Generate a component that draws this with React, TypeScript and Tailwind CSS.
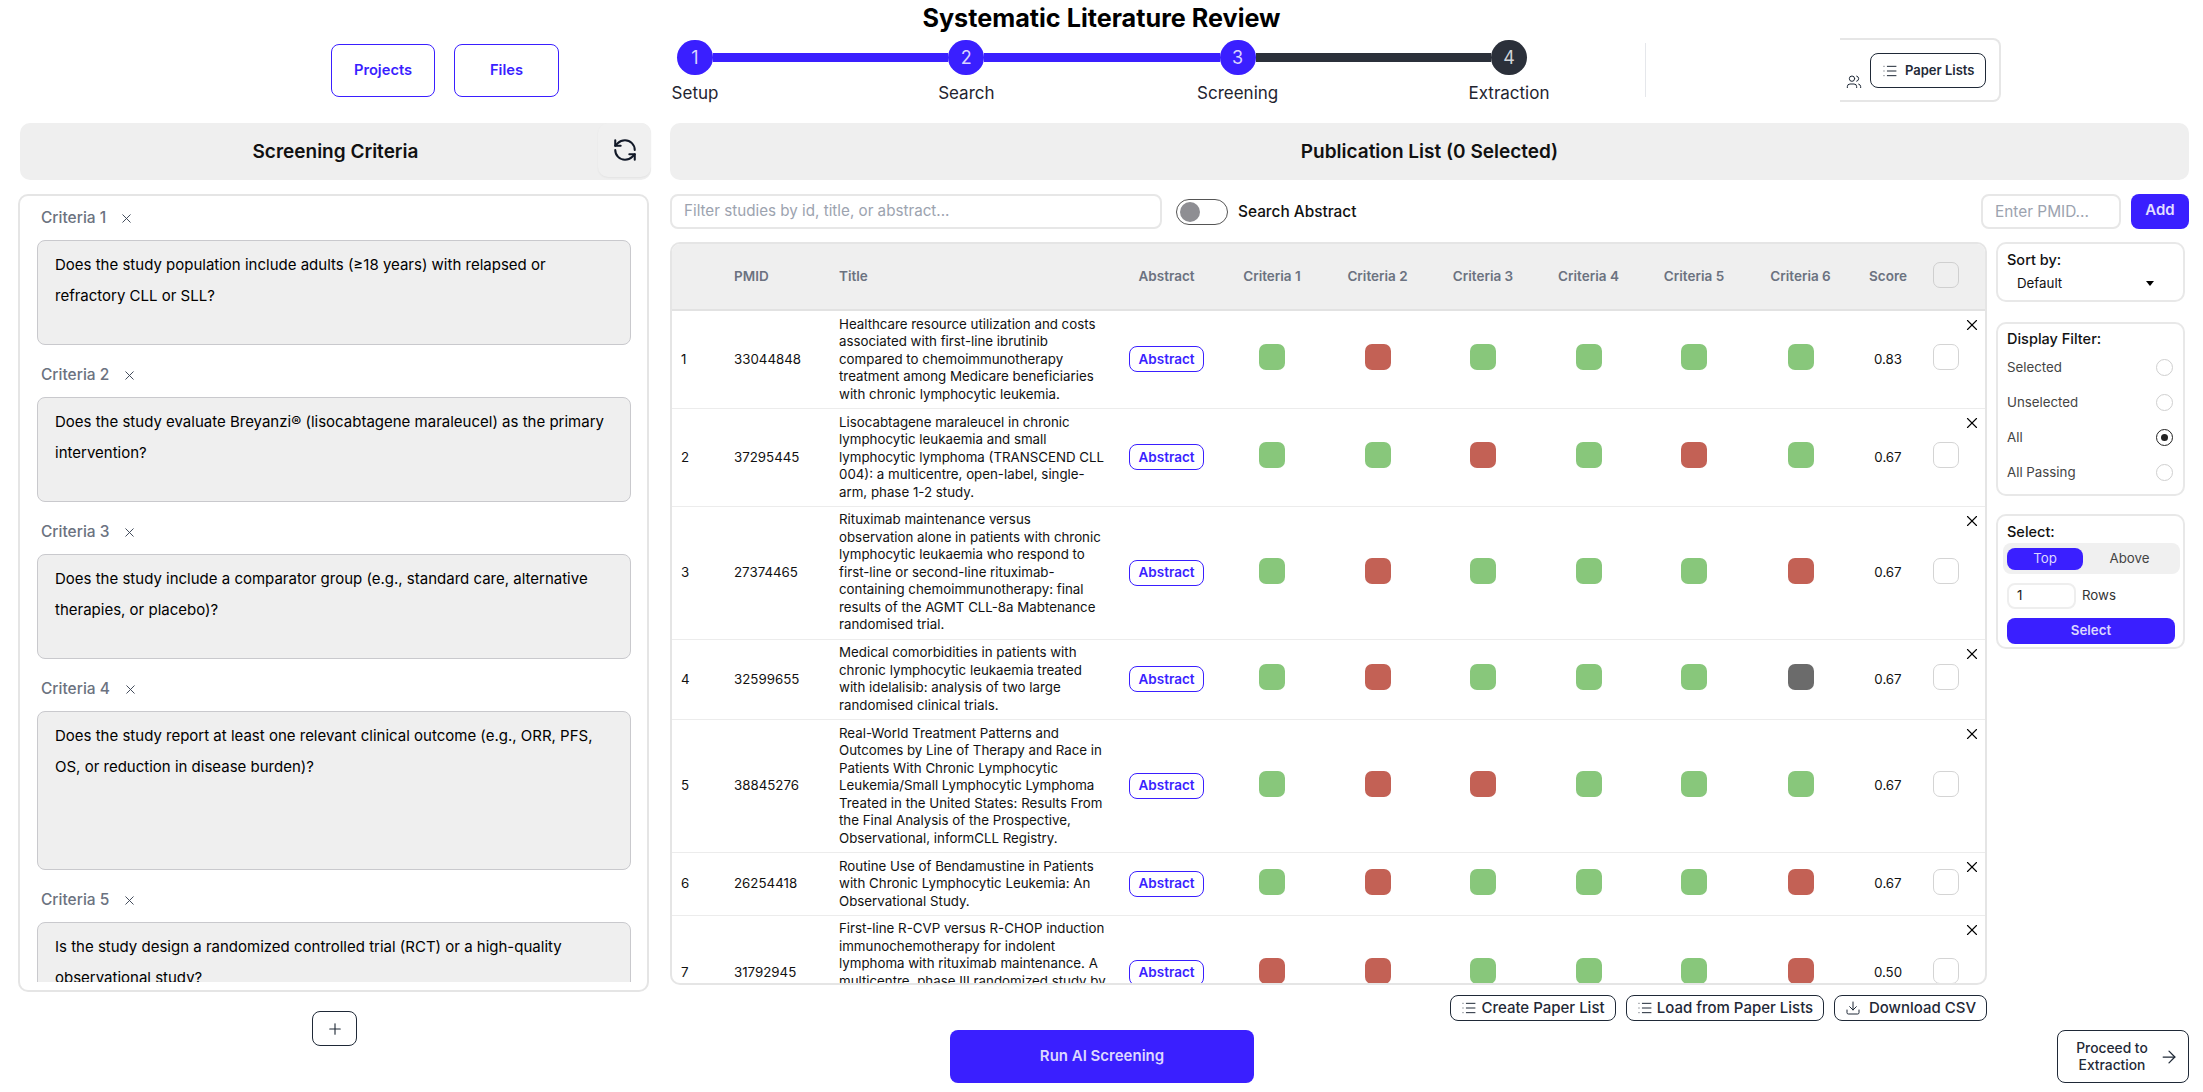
import { ArrowRight, Download, List, Plus, RefreshCcw, Users, X } from 'lucide-react'

type Mark = 'g' | 'r' | 'n'

type Paper = {
  pmid: string
  title: string
  marks: Mark[]
  score: string
}

const papers: Paper[] = [
  {
    pmid: '33044848',
    title:
      'Healthcare resource utilization and costs associated with first-line ibrutinib compared to chemoimmunotherapy treatment among Medicare beneficiaries with chronic lymphocytic leukemia.',
    marks: ['g', 'r', 'g', 'g', 'g', 'g'],
    score: '0.83',
  },
  {
    pmid: '37295445',
    title:
      'Lisocabtagene maraleucel in chronic lymphocytic leukaemia and small lymphocytic lymphoma (TRANSCEND CLL 004): a multicentre, open-label, single-arm, phase 1-2 study.',
    marks: ['g', 'g', 'r', 'g', 'r', 'g'],
    score: '0.67',
  },
  {
    pmid: '27374465',
    title:
      'Rituximab maintenance versus observation alone in patients with chronic lymphocytic leukaemia who respond to first-line or second-line rituximab-containing chemoimmunotherapy: final results of the AGMT CLL-8a Mabtenance randomised trial.',
    marks: ['g', 'r', 'g', 'g', 'g', 'r'],
    score: '0.67',
  },
  {
    pmid: '32599655',
    title:
      'Medical comorbidities in patients with chronic lymphocytic leukaemia treated with idelalisib: analysis of two large randomised clinical trials.',
    marks: ['g', 'r', 'g', 'g', 'g', 'n'],
    score: '0.67',
  },
  {
    pmid: '38845276',
    title:
      'Real-World Treatment Patterns and Outcomes by Line of Therapy and Race in Patients With Chronic Lymphocytic Leukemia/Small Lymphocytic Lymphoma Treated in the United States: Results From the Final Analysis of the Prospective, Observational, informCLL Registry.',
    marks: ['g', 'r', 'r', 'g', 'g', 'g'],
    score: '0.67',
  },
  {
    pmid: '26254418',
    title:
      'Routine Use of Bendamustine in Patients with Chronic Lymphocytic Leukemia: An Observational Study.',
    marks: ['g', 'r', 'g', 'g', 'g', 'r'],
    score: '0.67',
  },
  {
    pmid: '31792945',
    title:
      'First-line R-CVP versus R-CHOP induction immunochemotherapy for indolent lymphoma with rituximab maintenance. A multicentre, phase III randomized study by the Fondazione Italiana Linfomi and the Gruppo Italiano Studio Linfomi.',
    marks: ['r', 'r', 'g', 'g', 'g', 'r'],
    score: '0.50',
  },
]

const criteria = [
  {
    text: 'Does the study population include adults (≥18 years) with relapsed or refractory CLL or SLL?',
    tall: false,
  },
  {
    text: 'Does the study evaluate Breyanzi® (lisocabtagene maraleucel) as the primary intervention?',
    tall: false,
  },
  {
    text: 'Does the study include a comparator group (e.g., standard care, alternative therapies, or placebo)?',
    tall: false,
  },
  {
    text: 'Does the study report at least one relevant clinical outcome (e.g., ORR, PFS, OS, or reduction in disease burden)?',
    tall: true,
  },
  {
    text: 'Is the study design a randomized controlled trial (RCT) or a high-quality observational study?',
    tall: false,
  },
]

const steps = [
  { n: 1, label: 'Setup', active: true },
  { n: 2, label: 'Search', active: true },
  { n: 3, label: 'Screening', active: true },
  { n: 4, label: 'Extraction', active: false },
]

function Swatch({ mark }: { mark: Mark }) {
  const color = mark === 'g' ? 'bg-[#88c77b]' : mark === 'r' ? 'bg-[#c36155]' : 'bg-[#6b6b6b]'
  return <div className={`mx-auto mb-1 h-[26px] w-[26px] rounded-[7px] ${color}`} />
}

function Stepper() {
  return (
    <div className="ml-[118px] flex w-[850px] items-start">
      {steps.map((s, i) => (
        <div key={s.n} className={i < 3 ? 'flex flex-1 items-start' : 'flex items-start'}>
          <div className="mt-[2px] flex w-[36px] flex-col items-center">
            <div
              className={`flex h-[35px] w-[36px] items-center justify-center rounded-full text-[18px] ${
                s.active ? 'bg-[#3a1fff] text-[#d9d4ff]' : 'bg-[#2b303a] text-[#d1d5db]'
              }`}
            >
              {s.n}
            </div>
            <div className="mt-[5px] whitespace-nowrap text-[17px] leading-[26px] text-[#1f2430]">{s.label}</div>
          </div>
          {i < 3 && (
            <div className={`mt-[15px] h-[9px] flex-1 ${i < 2 ? 'bg-[#3a1fff]' : 'bg-[#2b303a]'}`} />
          )}
        </div>
      ))}
    </div>
  )
}

function Header() {
  return (
    <>
      <h1 className="h-[38px] pt-[1px] text-center text-[25.2px] font-bold leading-[34px] text-black">
        Systematic Literature Review
      </h1>
      <div className="flex h-[64px] items-start pl-[331px]">
        <button className="mt-[6px] h-[53px] w-[104px] rounded-lg border border-[#3a1fff] text-[14.7px] font-semibold text-[#3a1fff]">
          Projects
        </button>
        <button className="ml-[19px] mt-[6px] h-[53px] w-[105px] rounded-lg border border-[#3a1fff] text-[14.7px] font-semibold text-[#3a1fff]">
          Files
        </button>
        <Stepper />
        <div className="ml-[118px] mt-[5px] h-[54px] w-px bg-[#e5e7eb]" />
        <div className="ml-[194px] flex h-[64px] w-[161px] items-start overflow-hidden rounded-r-lg border-y-2 border-r-2 border-[#e6e6e6]">
          <div className="ml-[6px] mt-[34px] h-[14px] w-[16px] overflow-hidden text-[#1f2937]">
            <Users size={16} strokeWidth={1.5} />
          </div>
          <button className="ml-[8px] mt-[13px] flex h-[35px] w-[116px] items-center rounded-lg border border-[#1f2937] pl-[11px] text-[13px] font-semibold text-[#1f2937]">
            <List size={16} strokeWidth={1.5} className="mr-[7px]" />
            Paper Lists
          </button>
        </div>
      </div>
    </>
  )
}

function CriteriaColumn() {
  return (
    <div className="w-[631px]">
      <div className="relative flex h-[57px] items-center justify-center rounded-[10px] bg-[#efefef] pt-[2px] text-[19px] font-semibold text-[#111]">
        Screening Criteria
        <button className="absolute right-0 top-0 flex h-[54px] w-[53px] items-center justify-center rounded-[10px] bg-[#f0f0f0] shadow-[0_1px_2px_rgba(0,0,0,0.05)]">
          <RefreshCcw size={26} strokeWidth={1.9} className="text-[#111827]" />
        </button>
      </div>
      <div className="-ml-[2px] mt-[14px] h-[798px] w-[631px] rounded-[10px] border-2 border-[#e5e5e5] pb-[8px] pl-[17px] pr-[16px] pt-[10px]">
        <div className="flex h-full flex-col gap-[18px] overflow-hidden">
          {criteria.map((c, i) => (
            <div key={i} className="shrink-0">
              <div className="mb-[10px] flex h-[24px] items-center pl-[4px] text-[15.5px] font-medium text-[#6b7280]">
                <span>Criteria {i + 1}</span>
                <X size={15} strokeWidth={1.5} className="ml-[13px] text-[#374151]" />
              </div>
              <div
                className={`rounded-lg border border-[#c9c9cd] bg-[#efefef] px-[17px] py-[8px] text-[15px] leading-[31px] text-black ${
                  c.tall ? 'h-[159px]' : 'h-[105px]'
                }`}
              >
                {c.text}
              </div>
            </div>
          ))}
        </div>
      </div>
      <div className="mt-[19px] flex justify-center pr-[2px]">
        <button className="flex h-[35px] w-[45px] items-center justify-center rounded-lg border border-[#1f2937] text-[#1f2937]">
          <Plus size={18} strokeWidth={1.5} />
        </button>
      </div>
    </div>
  )
}

function PaperTable() {
  const th = 'text-[13.5px] font-semibold text-[#6b7280]'
  return (
    <div className="h-[743px] w-[1317px] overflow-hidden rounded-[10px] border-2 border-[#e5e5e5]">
      <table className="w-[1315px] table-fixed border-collapse text-[13.3px] leading-[17.5px] text-[#111]">
        <colgroup>
          <col className="w-[52px]" />
          <col className="w-[105px]" />
          <col className="w-[290px]" />
          <col className="w-[100px]" />
          <col className="w-[106px]" />
          <col className="w-[105px]" />
          <col className="w-[106px]" />
          <col className="w-[105px]" />
          <col className="w-[106px]" />
          <col className="w-[107px]" />
          <col className="w-[68px]" />
          <col className="w-[48px]" />
          <col />
        </colgroup>
        <thead>
          <tr className="h-[66px] border-b-2 border-[#e2e2e2] bg-[#efefef]">
            <th className={th} />
            <th className={`${th} pl-[10px] text-left`}>PMID</th>
            <th className={`${th} pl-[10px] text-left`}>Title</th>
            <th className={`${th} pr-[5px]`}>Abstract</th>
            {[1, 2, 3, 4, 5, 6].map((n) => (
              <th key={n} className={th}>
                Criteria {n}
              </th>
            ))}
            <th className={th}>Score</th>
            <th className={th}>
              <div className="mx-auto mb-1 h-[26px] w-[26px] rounded-[7px] border border-[#cfcfcf]" />
            </th>
            <th className={th} />
          </tr>
        </thead>
        <tbody>
          {papers.map((p, i) => (
            <tr key={p.pmid} className="border-b border-[#ececec]">
              <td className="pl-[9px] align-middle">{i + 1}</td>
              <td className="pl-[10px] align-middle">{p.pmid}</td>
              <td className="py-[4.7px] pl-[10px] pr-[12px] align-middle">{p.title}</td>
              <td className="pr-[5px] align-middle">
                <button className="mx-auto block h-[26px] w-[75px] rounded-lg border border-[#3a1fff] text-[13.5px] font-semibold text-[#3a1fff]">
                  Abstract
                </button>
              </td>
              {p.marks.map((m, j) => (
                <td key={j} className="align-middle">
                  <Swatch mark={m} />
                </td>
              ))}
              <td className="text-center align-middle">{p.score}</td>
              <td className="align-middle">
                <div className="mx-auto mb-1 h-[26px] w-[26px] rounded-[7px] border border-[#d4d4d4]" />
              </td>
              <td className="pt-[5px] align-top">
                <X size={18} strokeWidth={1.5} className="-ml-[7px] text-black" />
              </td>
            </tr>
          ))}
        </tbody>
      </table>
    </div>
  )
}

function Radio({ label, checked }: { label: string; checked?: boolean }) {
  return (
    <div className="flex h-[35px] items-center justify-between pr-[10px] text-[13.3px] text-[#444]">
      <span>{label}</span>
      {checked ? (
        <span className="flex h-[17px] w-[17px] items-center justify-center rounded-full border border-[#222]">
          <span className="h-[7px] w-[7px] rounded-full bg-[#222]" />
        </span>
      ) : (
        <span className="h-[17px] w-[17px] rounded-full border border-[#cfcfcf]" />
      )}
    </div>
  )
}

function SidePanels() {
  return (
    <div className="ml-[9px] w-[189px]">
      <div className="h-[60px] rounded-[10px] border-2 border-[#e8e8e8] pl-[9px] pt-[5px]">
        <div className="text-[14.5px] font-medium leading-[22px] text-[#111]">Sort by:</div>
        <div className="mt-[1px] flex items-center justify-between pl-[10px] pr-[29px] text-[13.3px] leading-[22px] text-[#111]">
          <span>Default</span>
          <span className="h-0 w-0 border-x-[4px] border-t-[5px] border-x-transparent border-t-black" />
        </div>
      </div>
      <div className="mt-[20px] h-[174px] rounded-[10px] border-2 border-[#e8e8e8] pl-[9px] pt-[4px]">
        <div className="text-[14.5px] font-medium leading-[22px] text-[#111]">Display Filter:</div>
        <Radio label="Selected" />
        <Radio label="Unselected" />
        <Radio label="All" checked />
        <Radio label="All Passing" />
      </div>
      <div className="mt-[18px] h-[135px] rounded-[10px] border-2 border-[#e8e8e8] pt-[5px]">
        <div className="pl-[9px] text-[14.5px] font-medium leading-[22px] text-[#111]">Select:</div>
        <div className="ml-[5px] flex h-[31px] w-[177px] items-center rounded-lg bg-[#f0f0f0] pl-[4px] text-[13.3px]">
          <div className="flex h-[22px] w-[76px] items-center justify-center rounded-lg bg-[#3a1fff] text-[#dcd7ff]">
            Top
          </div>
          <div className="flex-1 pr-[4px] text-center text-[#444]">Above</div>
        </div>
        <div className="mt-[9px] flex items-center pl-[9px]">
          <div className="flex h-[26px] w-[69px] items-center rounded-lg border-2 border-[#eeeeee] pl-[8px] text-[13.3px] text-[#222]">
            1
          </div>
          <span className="ml-[6px] text-[13.3px] text-[#333]">Rows</span>
        </div>
        <button className="ml-[9px] mt-[9px] h-[26px] w-[168px] rounded-lg bg-[#3a1fff] text-[13.3px] font-semibold text-[#dcd7ff]">
          Select
        </button>
      </div>
    </div>
  )
}

function PublicationColumn() {
  const outline =
    'flex h-[26px] items-center justify-center rounded-lg border border-[#1f2937] text-[15px] font-medium text-[#1f2937]'
  return (
    <div className="ml-[19px] w-[1519px]">
      <div className="flex h-[57px] items-center justify-center rounded-[10px] bg-[#efefef] pt-[2px] text-[19px] font-semibold text-[#111]">
        Publication List (0 Selected)
      </div>
      <div className="mt-[14px] flex h-[35px] items-center">
        <div className="flex h-[35px] w-[492px] items-center rounded-lg border-2 border-[#e7e7e7] pl-[12px] text-[15.2px] text-[#9ca3af]">
          Filter studies by id, title, or abstract...
        </div>
        <div className="ml-[14px] flex h-[26px] w-[52px] items-center rounded-full border border-[#555] pl-[3px]">
          <div className="h-[20px] w-[20px] rounded-full bg-[#8e8e93]" />
        </div>
        <span className="ml-[10px] pt-[1px] text-[15.4px] font-medium text-[#111]">Search Abstract</span>
        <div className="ml-auto flex h-[35px] w-[140px] items-center rounded-lg border-2 border-[#e7e7e7] pl-[12px] text-[15.4px] text-[#9ca3af]">
          Enter PMID...
        </div>
        <button className="ml-[10px] h-[35px] w-[58px] rounded-lg bg-[#3a1fff] pb-[3px] text-[15px] font-semibold text-[#e3dfff]">
          Add
        </button>
      </div>
      <div className="mt-[13px] flex items-start">
        <PaperTable />
        <SidePanels />
      </div>
      <div className="mt-[10px] flex w-[1317px] justify-end gap-[10px]">
        <button className={`${outline} w-[166px]`}>
          <List size={16} strokeWidth={1.5} className="mr-[4px]" />
          Create Paper List
        </button>
        <button className={`${outline} w-[198px]`}>
          <List size={16} strokeWidth={1.5} className="mr-[4px]" />
          Load from Paper Lists
        </button>
        <button className={`${outline} w-[153px]`}>
          <Download size={16} strokeWidth={1.5} className="mr-[8px]" />
          Download CSV
        </button>
      </div>
      <div className="mt-[9px] flex items-start">
        <button className="ml-[280px] h-[53px] w-[304px] rounded-lg bg-[#3a1fff] text-[15px] font-semibold text-[#dcd7ff]">
          Run AI Screening
        </button>
        <button className="ml-auto flex h-[53px] w-[132px] items-center rounded-lg border border-[#1f2937] pl-[14px] text-[13.8px] font-medium leading-[17px] text-[#1f2937]">
          <span className="w-[80px] text-center">
            Proceed to
            <br />
            Extraction
          </span>
          <ArrowRight size={20} strokeWidth={1.5} className="ml-[7px]" />
        </button>
      </div>
    </div>
  )
}

export default function App() {
  return (
    <div className="h-[1092px] w-full overflow-hidden bg-white font-['Inter',sans-serif]">
      <Header />
      <div className="mt-[21px] flex pl-[20px]">
        <CriteriaColumn />
        <PublicationColumn />
      </div>
    </div>
  )
}
